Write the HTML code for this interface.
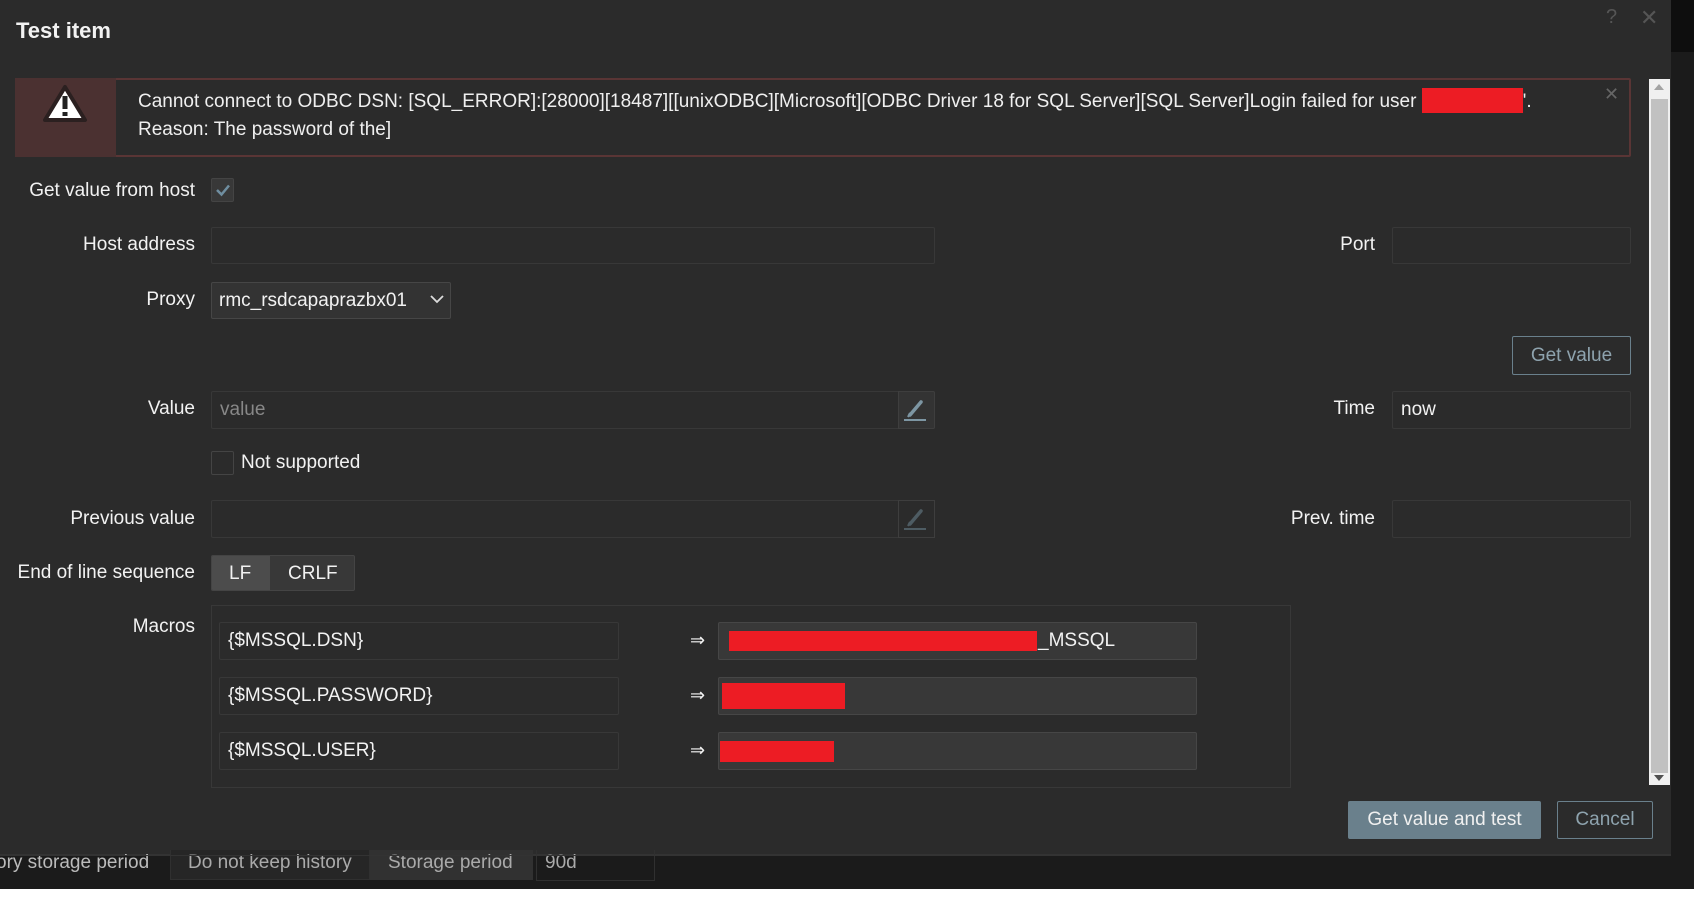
<!DOCTYPE html>
<html><head><meta charset="utf-8"><style>
*{box-sizing:border-box;margin:0;padding:0}
body{width:1694px;height:903px;background:#fff;position:relative;overflow:hidden;font-family:"Liberation Sans",Arial,sans-serif;color:#f2f2f2}
.a{position:absolute}
.lbl{position:absolute;font-size:19px;text-align:right;white-space:nowrap;line-height:20px}
.inp{position:absolute;background:#2b2b2b;border:1px solid #383838;border-radius:2px;font-size:19px;line-height:36px;padding-left:8px;white-space:nowrap}
.red{position:absolute;background:#ed1c24}
</style></head><body>
<div class="a" style="left:0;top:0;width:1694px;height:889px;background:#1b1b1b"></div>
<div class="a" style="left:1671px;top:0;width:23px;height:52px;background:#0e0e0e"></div>
<!-- modal -->
<div class="a" style="left:0;top:0;width:1671px;height:855px;background:#2b2b2b;border-bottom:1px solid #333"></div>
<div class="a" style="left:16px;top:18px;font-size:22px;font-weight:bold;color:#f2f2f2">Test item</div>
<div class="a" style="left:1606px;top:6px;font-size:20px;color:#555">?</div>
<div class="a" style="left:1640px;top:5px;font-size:22px;color:#555">✕</div>
<!-- message -->
<div class="a" style="left:15px;top:78px;width:1616px;height:79px;border:2px solid #5a3535;border-radius:2px;background:#2b2b2b"></div>
<div class="a" style="left:15px;top:78px;width:101px;height:79px;background:#4b3131"></div>
<svg class="a" style="left:42px;top:84px" width="46" height="40" viewBox="0 0 46 40"><path d="M23 3 L43 36 L3 36 Z" fill="#fff" stroke="#2b2020" stroke-width="4" stroke-linejoin="round"/><rect x="20.5" y="12" width="5" height="13" fill="#222"/><rect x="20.5" y="28" width="5" height="4" fill="#222"/></svg>
<div class="a" style="left:138px;top:88px;font-size:19px;line-height:28px;color:#efefef;white-space:nowrap">Cannot connect to ODBC DSN: [SQL_ERROR]:[28000][18487][[unixODBC][Microsoft][ODBC Driver 18 for SQL Server][SQL Server]Login failed for user <span style="display:inline-block;width:101px;height:25px;background:#ed1c24;vertical-align:-6px"></span>'.<br>Reason: The password of the]</div>
<div class="a" style="left:1604px;top:84px;font-size:18px;color:#666">✕</div>
<!-- scrollbar -->
<div class="a" style="left:1649px;top:79px;width:21px;height:706px;background:#f0f0f0"></div>
<div class="a" style="left:1651px;top:99px;width:17px;height:674px;background:#c1c1c1"></div>
<div class="a" style="left:1654px;top:84px;width:0;height:0;border-left:5px solid transparent;border-right:5px solid transparent;border-bottom:6px solid #a3a3a3"></div>
<div class="a" style="left:1654px;top:775px;width:0;height:0;border-left:5px solid transparent;border-right:5px solid transparent;border-top:6px solid #505050"></div>
<!-- rows -->
<div class="lbl" style="right:1499px;top:181px">Get value from host</div>
<div class="a" style="left:211px;top:178px;width:23px;height:24px;border:1px solid #444;border-radius:2px;background:#383838"></div>
<svg class="a" style="left:214px;top:182px" width="18" height="16"><path d="M3 8 L7.5 12.5 L15 3.5" stroke="#6f8ea0" stroke-width="2.5" fill="none"/></svg>

<div class="lbl" style="right:1499px;top:235px">Host address</div>
<div class="inp" style="left:211px;top:227px;width:724px;height:37px"></div>
<div class="lbl" style="right:319px;top:235px">Port</div>
<div class="inp" style="left:1392px;top:227px;width:239px;height:37px"></div>

<div class="lbl" style="right:1499px;top:290px">Proxy</div>
<div class="inp" style="left:211px;top:282px;width:240px;height:37px;background:#333;border-color:#464646;padding-left:7px;color:#f2f2f2">rmc_rsdcapaprazbx01</div>
<svg class="a" style="left:430px;top:294px" width="14" height="10"><path d="M1 2 L7 8 L13 2" stroke="#ddd" stroke-width="1.8" fill="none"/></svg>

<div class="a" style="left:1512px;top:336px;width:119px;height:39px;border:1px solid #6a808c;border-radius:2px;font-size:19px;color:#8ea3ae;text-align:center;line-height:37px">Get value</div>

<div class="lbl" style="right:1499px;top:399px">Value</div>
<div class="inp" style="left:211px;top:391px;width:724px;height:38px;color:#888">value</div>
<div class="a" style="left:898px;top:391px;width:37px;height:38px;border:1px solid #3e3e3e;background:#333;border-radius:0 2px 2px 0"></div>
<svg class="a" style="left:904px;top:397px" width="26" height="26"><path d="M6 18 L17 5" stroke="#7d96a3" stroke-width="3.5" stroke-linecap="round"/><path d="M4 20 L6 16" stroke="#7d96a3" stroke-width="2"/><rect x="0" y="22" width="22" height="2" fill="#7d96a3"/></svg>
<div class="lbl" style="right:319px;top:399px">Time</div>
<div class="inp" style="left:1392px;top:391px;width:239px;height:38px">now</div>

<div class="a" style="left:211px;top:451px;width:23px;height:24px;border:1px solid #444;border-radius:2px;background:#2b2b2b"></div>
<div class="lbl" style="left:241px;top:453px;text-align:left">Not supported</div>

<div class="lbl" style="right:1499px;top:509px">Previous value</div>
<div class="inp" style="left:211px;top:500px;width:724px;height:38px"></div>
<div class="a" style="left:898px;top:500px;width:37px;height:38px;border:1px solid #3e3e3e;background:#2b2b2b"></div>
<svg class="a" style="left:904px;top:506px" width="26" height="26"><path d="M6 18 L17 5" stroke="#4e5c63" stroke-width="3.5" stroke-linecap="round"/><path d="M4 20 L6 16" stroke="#4e5c63" stroke-width="2"/><rect x="0" y="22" width="22" height="2" fill="#4e5c63"/></svg>
<div class="lbl" style="right:319px;top:509px">Prev. time</div>
<div class="inp" style="left:1392px;top:500px;width:239px;height:38px"></div>

<div class="lbl" style="right:1499px;top:563px">End of line sequence</div>
<div class="a" style="left:211px;top:555px;width:144px;height:36px;border:1px solid #444;border-radius:2px;background:#383838;overflow:hidden">
<div class="a" style="left:0;top:0;width:58px;height:36px;background:#4c4c4c"></div>
<div class="a" style="left:17px;top:7px;font-size:19px">LF</div>
<div class="a" style="left:76px;top:7px;font-size:19px">CRLF</div></div>

<div class="lbl" style="right:1499px;top:617px">Macros</div>
<div class="a" style="left:211px;top:605px;width:1080px;height:183px;border:1px solid #383838"></div>
<div class="inp" style="left:219px;top:622px;width:400px;height:38px">{$MSSQL.DSN}</div>
<div class="inp" style="left:219px;top:677px;width:400px;height:38px">{$MSSQL.PASSWORD}</div>
<div class="inp" style="left:219px;top:732px;width:400px;height:38px">{$MSSQL.USER}</div>
<div class="a" style="left:690px;top:630px;font-size:18px">⇒</div>
<div class="a" style="left:690px;top:685px;font-size:18px">⇒</div>
<div class="a" style="left:690px;top:740px;font-size:18px">⇒</div>
<div class="inp" style="left:718px;top:622px;width:479px;height:38px;background:#383838;border-color:#464646"><span style="padding-left:311px">_MSSQL</span></div>
<div class="inp" style="left:718px;top:677px;width:479px;height:38px;background:#383838;border-color:#464646"></div>
<div class="inp" style="left:718px;top:732px;width:479px;height:38px;background:#383838;border-color:#464646"></div>
<div class="red" style="left:729px;top:631px;width:308px;height:20px"></div>
<div class="red" style="left:722px;top:683px;width:123px;height:26px"></div>
<div class="red" style="left:720px;top:741px;width:114px;height:21px"></div>

<div class="a" style="left:1348px;top:801px;width:193px;height:38px;background:#6a808c;border-radius:2px;font-size:19px;color:#f0f0f0;text-align:center;line-height:38px">Get value and test</div>
<div class="a" style="left:1557px;top:801px;width:96px;height:38px;border:1px solid #6a808c;border-radius:2px;font-size:19px;color:#8ea3ae;text-align:center;line-height:36px">Cancel</div>

<!-- bottom page -->
<div class="a" style="left:-4px;top:852px;font-size:19px;color:#bbb;white-space:nowrap">ory storage period</div>
<div class="a" style="left:170px;top:850px;width:200px;height:30px;background:#262626;border:1px solid #303030;border-top:none"></div>
<div class="a" style="left:370px;top:850px;width:163px;height:30px;background:#313131"></div>
<div class="a" style="left:536px;top:850px;width:119px;height:31px;border:1px solid #303030;border-top:none"></div>
<div class="a" style="left:188px;top:852px;font-size:19px;color:#aaa">Do not keep history</div>
<div class="a" style="left:388px;top:852px;font-size:19px;color:#aaa">Storage period</div>
<div class="a" style="left:545px;top:852px;font-size:19px;color:#aaa">90d</div>
<div class="a" style="left:0;top:855px;width:1671px;height:1px;background:#333"></div>
</body></html>
